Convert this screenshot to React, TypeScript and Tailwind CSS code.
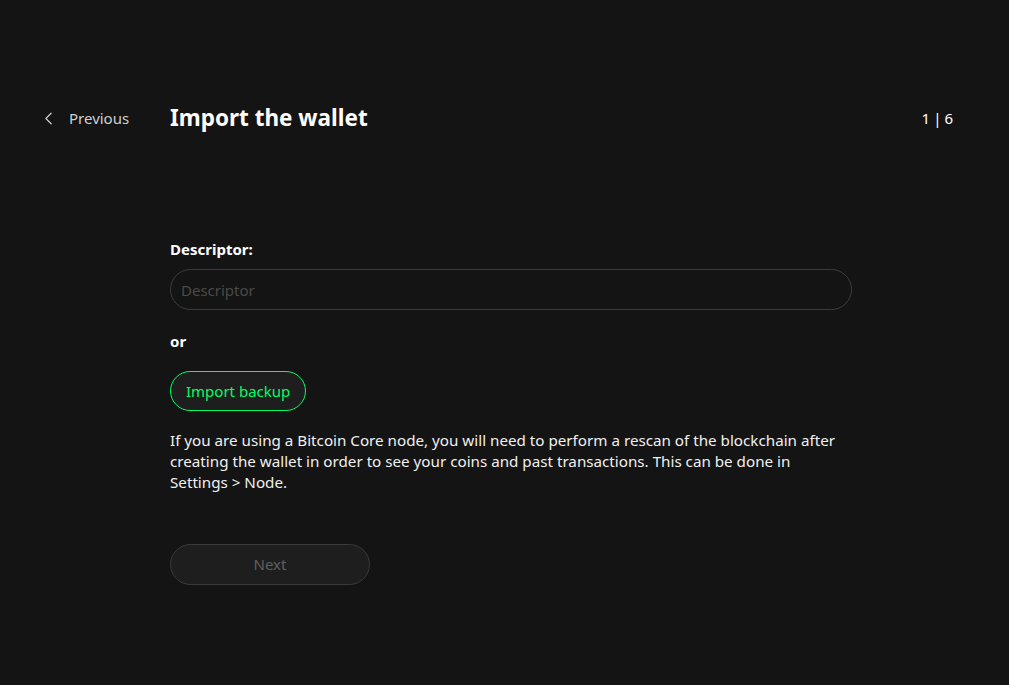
import { ChevronLeft } from 'lucide-react';

export default function App() {
    return (
        <div
            className="min-h-screen w-full bg-[#141414] text-white"
            style={{ fontFamily: '"Noto Sans", "Liberation Sans", sans-serif' }}
        >
            {/* Header */}
            <header className="flex items-center pt-[102px] pl-[38px] pr-[56px]">
                <button className="flex items-center gap-[10px] w-[132px] text-[15px] text-[#cfcfcf]">
                    <ChevronLeft className="w-[21px] h-[21px]" strokeWidth={1.4} />
                    <span>Previous</span>
                </button>
                <h1 className="flex-1 text-[22.5px] font-bold leading-[32px]">Import the wallet</h1>
                <span className="flex items-center gap-[3px] text-[15px]">
                    <span>1</span>
                    <span>|</span>
                    <span>6</span>
                </span>
            </header>

            {/* Content */}
            <main className="pl-[170px] pt-[104px]">
                <label className="block text-[15px] font-bold leading-[22px]">Descriptor:</label>
                <input
                    placeholder="Descriptor"
                    className="mt-[9px] w-[682px] h-[41px] rounded-full border border-[#3c3c3c] bg-transparent px-[10px] text-[15px] placeholder:text-[#4a4a4a] outline-none"
                />
                <p className="mt-[20px] text-[15px] font-bold leading-[22px]">or</p>
                <button className="mt-[19px] h-[40px] px-[15px] rounded-full border border-[#00ff66] bg-[#1e1e1e] text-[15px] text-[#00ff66]">
                    Import backup
                </button>
                <p className="mt-[19px] w-[700px] text-[15.2px] leading-[21px] text-[#f0f0f0]">
                    If you are using a Bitcoin Core node, you will need to perform a rescan of the blockchain after
                    <br />
                    creating the wallet in order to see your coins and past transactions. This can be done in
                    <br />
                    Settings &gt; Node.
                </p>
                <button className="mt-[51px] w-[200px] h-[41px] rounded-full border border-[#3a3a3a] bg-[#1e1e1e] text-[15px] text-[#5e5e5e]">
                    Next
                </button>
            </main>
        </div>
    );
}
